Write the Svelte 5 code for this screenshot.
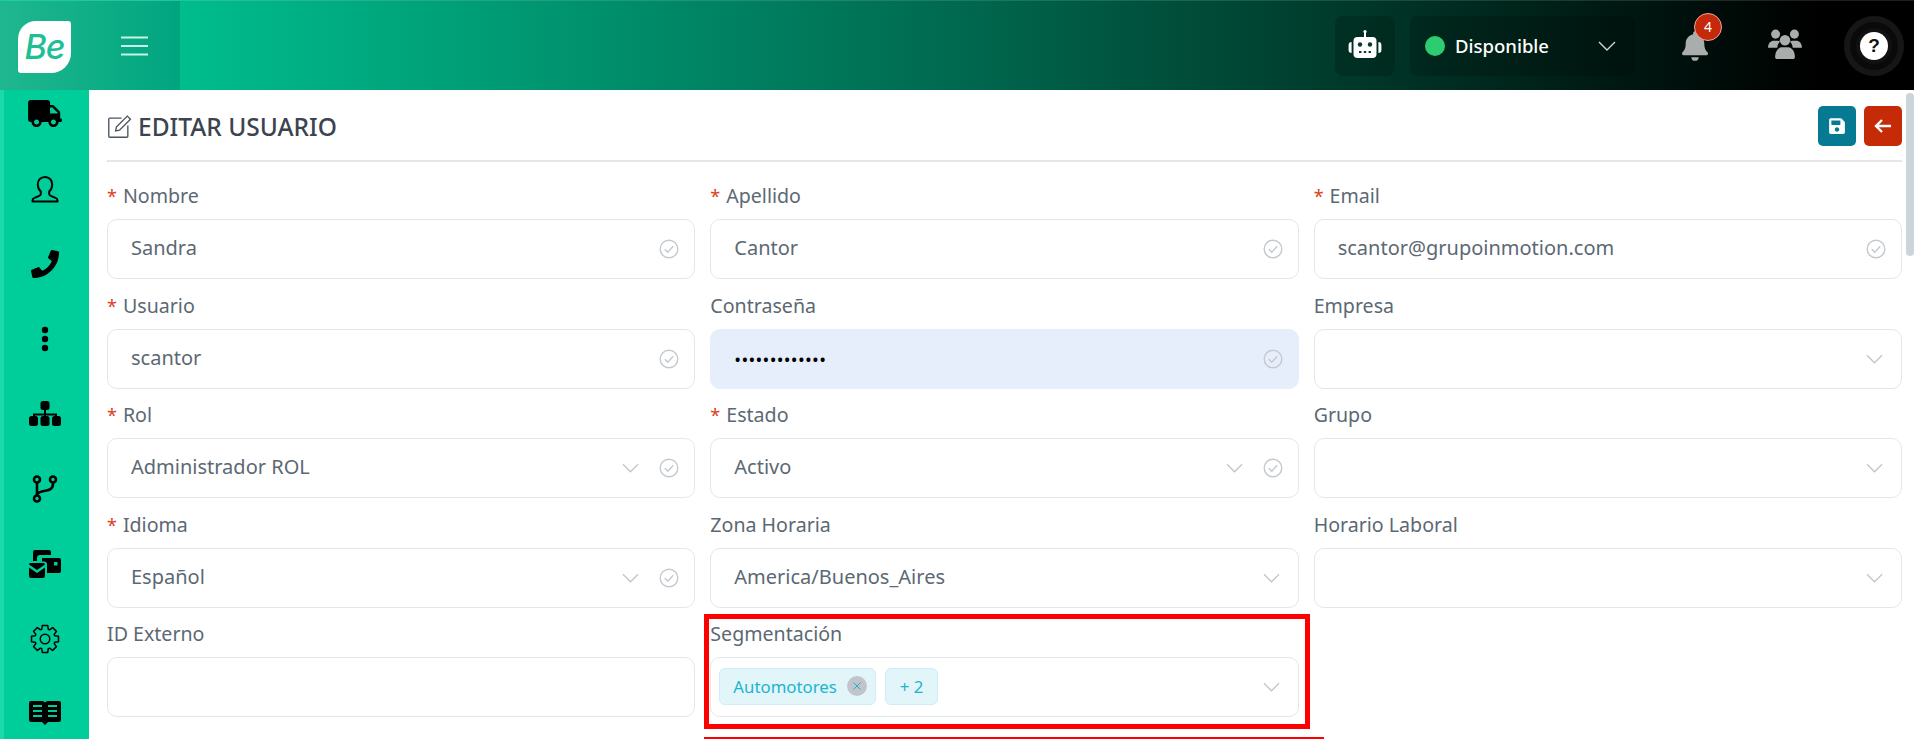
<script>
  const fields = [
    { label: 'Nombre', req: true, value: 'Sandra', check: true },
    { label: 'Apellido', req: true, value: 'Cantor', check: true },
    { label: 'Email', req: true, value: 'scantor@grupoinmotion.com', check: true },
    { label: 'Usuario', req: true, value: 'scantor', check: true },
    { label: 'Contraseña', value: '•••••••••••••', check: true, pass: true },
    { label: 'Empresa', value: '', select: true },
    { label: 'Rol', req: true, value: 'Administrador ROL', check: true, select: true },
    { label: 'Estado', req: true, value: 'Activo', check: true, select: true },
    { label: 'Grupo', value: '', select: true },
    { label: 'Idioma', req: true, value: 'Español', check: true, select: true },
    { label: 'Zona Horaria', value: 'America/Buenos_Aires', select: true },
    { label: 'Horario Laboral', value: '', select: true },
    { label: 'ID Externo', value: '' },
    { label: 'Segmentación', value: '', select: true, chips: true }
  ];

  let gear = '';
  for (let i = 0; i < 8; i++) {
    const a = (i / 8) * Math.PI * 2;
    const pts = [[-0.32, 8.2], [-0.2, 11], [0.2, 11], [0.32, 8.2]];
    for (const [da, r] of pts) {
      const x = 12 + r * Math.cos(a + da);
      const y = 12 + r * Math.sin(a + da);
      gear += (gear ? 'L' : 'M') + x.toFixed(2) + ' ' + y.toFixed(2);
    }
  }
  gear += 'Z';
</script>

<div class="page">
  <header class="topbar">
    <div class="brand">
      <div class="logo"><span>Be</span></div>
      <svg class="burger" viewBox="0 0 27 20" width="27" height="20"><path d="M0 1.500h27M0 10h27M0 18.500h27" stroke="#c9f3e6" stroke-width="2" /></svg>
    </div>
    <div class="spacer"></div>
    <div class="tile robot">
      <svg viewBox="0 0 36 36" width="36" height="36">
        <path d="M18 3v6" stroke="#fff" stroke-width="2" />
        <circle cx="18" cy="3.500" r="1.600" fill="#fff" />
        <rect x="6.500" y="9" width="23" height="21" rx="4" fill="#fff" />
        <path d="M4.600 14v11a3 3 0 0 1-3-3v-5a3 3 0 0 1 3-3zM31.400 14v11a3 3 0 0 0 3-3v-5a3 3 0 0 0-3-3z" fill="#fff" />
        <circle cx="13" cy="16.500" r="2.200" fill="#0a3a2c" /><circle cx="23" cy="16.500" r="2.200" fill="#0a3a2c" />
        <path d="M12 24h12" stroke="#0a3a2c" stroke-width="1.800" stroke-dasharray="2.400 2.400" />
      </svg>
    </div>
    <div class="tile status">
      <i class="dot"></i><span class="st">Disponible</span>
      <svg class="chev" viewBox="0 0 18 10" width="18" height="10"><path d="M1 1l8 8 8-8" fill="none" stroke="#cdd6d2" stroke-width="1.400" /></svg>
    </div>
    <div class="bell">
      <svg viewBox="0 0 448 512" width="26" height="30"><path fill="#a9aeac" d="M224 512c35.320 0 63.970-28.650 63.970-64H160.030c0 35.350 28.650 64 63.970 64zm215.390-149.710c-19.320-20.760-55.470-51.990-55.470-154.290 0-77.700-54.480-139.900-127.940-155.160V32c0-17.670-14.320-32-31.980-32s-31.980 14.330-31.980 32v20.840C118.560 68.100 64.080 130.300 64.080 208c0 102.300-36.150 133.530-55.470 154.290-6 6.450-8.660 14.160-8.610 21.710.11 16.400 12.980 32 32.100 32h383.800c19.120 0 32-15.600 32.100-32 .05-7.550-2.610-15.270-8.610-21.710z" /></svg>
      <b class="badge">4</b>
    </div>
    <div class="users">
      <svg viewBox="0 0 36 34" width="36" height="32" fill="#a9aeac">
        <circle cx="8" cy="6.500" r="4.800" /><circle cx="28" cy="6.500" r="4.800" /><circle cx="18" cy="13" r="5.600" />
        <path d="M0 21c0-5 3-7.500 6-7.500h4c1 0 2 .4 2.600 1-1.600 1.600-2.600 3.200-2.800 6.500zM36 21c0-5-3-7.500-6-7.500h-4c-1 0-2 .4-2.600 1 1.600 1.600 2.600 3.200 2.800 6.500z" />
        <path d="M7.500 31c0-7 4-10.500 7-10.500h7c3 0 7 3.500 7 10.500 0 1.200-1 2-2 2h-17c-1 0-2-.8-2-2z" />
      </svg>
    </div>
    <div class="help"><span>?</span></div>
  </header>

  <div class="body">
    <nav class="side">
      <svg viewBox="0 0 640 512" width="34" height="27"><path d="M624 352h-16V243.900c0-12.700-5.100-24.900-14.100-33.900L494 110.100c-9-9-21.200-14.100-33.900-14.100H416V48c0-26.500-21.500-48-48-48H48C21.500 0 0 21.500 0 48v320c0 26.500 21.500 48 48 48h16c0 53 43 96 96 96s96-43 96-96h128c0 53 43 96 96 96s96-43 96-96h48c8.800 0 16-7.200 16-16v-32c0-8.800-7.200-16-16-16zM160 464c-26.500 0-48-21.500-48-48s21.500-48 48-48 48 21.500 48 48-21.500 48-48 48zm320 0c-26.500 0-48-21.500-48-48s21.500-48 48-48 48 21.500 48 48-21.500 48-48 48zm80-208H416V144h44.100l99.900 99.900V256z" /></svg>
      <svg viewBox="0 0 28 28" width="28" height="28"><path d="M14 2c-4.600 0-7.200 3.400-7.200 7.600 0 3 1.200 5.400 3 7v2.400c0 1.200-1 1.700-2.200 2.200l-4 1.700C2.300 23.300 1.500 24.300 1.500 25.500v1h25v-1c0-1.200-.8-2.200-2.100-2.600l-4-1.700c-1.200-.5-2.200-1-2.200-2.200v-2.400c1.800-1.600 3-4 3-7C21.200 5.400 18.600 2 14 2z" fill="none" stroke="#000" stroke-width="2" stroke-linejoin="round" /></svg>
      <svg viewBox="0 0 512 512" width="28" height="28"><path d="M493.400 24.600l-104-24c-11.300-2.600-22.900 3.300-27.500 13.900l-48 112c-4.200 9.800-1.400 21.300 6.900 28l60.600 49.600c-36 76.700-98.900 140.500-177.200 177.200l-49.600-60.600c-6.800-8.300-18.200-11.100-28-6.900l-112 48C3.900 366.500-2 378.100.6 389.400l24 104C27.100 504.200 36.700 512 48 512c256.100 0 464-207.500 464-464 0-11.200-7.700-20.900-18.600-23.400z" /></svg>
      <svg viewBox="0 0 8 26" width="8" height="26"><circle cx="4" cy="4" r="3.200" /><circle cx="4" cy="13" r="3.200" /><circle cx="4" cy="22" r="3.200" /></svg>
      <svg viewBox="0 0 32 26" width="32" height="26">
        <rect x="11.500" y="0" width="9" height="9" rx="2.500" />
        <path d="M16 8v7M5 17v-3.500h22V17" stroke="#000" stroke-width="2" fill="none" />
        <rect x="0" y="15" width="9" height="10" rx="2.500" /><rect x="11.500" y="15" width="9" height="10" rx="2.500" /><rect x="23" y="15" width="9" height="10" rx="2.500" />
      </svg>
      <svg viewBox="0 0 26 28" width="26" height="28" fill="none" stroke="#000" stroke-width="2.600">
        <circle cx="5" cy="4.500" r="3" /><circle cx="21" cy="4.500" r="3" /><circle cx="5" cy="23.500" r="3" />
        <path d="M5 7.500v13M21 7.500v1.500c0 4.500-3 6-6.500 6.500S5 17 5 20.500" />
      </svg>
      <svg viewBox="0 0 32 28" width="32" height="28">
        <path d="M4 2a2 2 0 0 1 2-2h14a2 2 0 0 1 2 2v3h-11a3 3 0 0 0-3 3v3H4z" />
        <path d="M13 8h17a2 2 0 0 1 2 2v11a2 2 0 0 1-2 2H18V14.500a3 3 0 0 0-3-3h-2z" />
        <rect x="25" y="12" width="3.500" height="3.500" fill="#00ce9a" />
        <path d="M0 14.500a1.500 1.500 0 0 1 1.500-1.500h13a1.500 1.500 0 0 1 1.500 1.500L8 20zM0 17.500l8 5.500 8-5.500V26a2 2 0 0 1-2 2H2a2 2 0 0 1-2-2z" />
      </svg>
      <svg viewBox="0 0 24 24" width="30" height="30"><path d={gear} fill="none" stroke="#000" stroke-width="1.200" stroke-linejoin="round" /><circle cx="12" cy="12" r="3.800" fill="none" stroke="#000" stroke-width="1.200" /></svg>
      <svg class="book" viewBox="0 0 32 24" width="32" height="24">
        <path d="M2 0h11c1.500 0 3 1 3 2 0-1 1.500-2 3-2h11a2 2 0 0 1 2 2v17a2 2 0 0 1-2 2H19l-3 3-3-3H2a2 2 0 0 1-2-2V2a2 2 0 0 1 2-2z" />
        <path d="M4 5h9M4 10h9M4 15h9M19 5h9M19 10h9M19 15h9" stroke="#00ce9a" stroke-width="2" />
      </svg>
    </nav>

    <main class="main">
      <div class="titlebar">
        <h1>
          <svg viewBox="0 0 24 24" width="25" height="25" fill="none" stroke="#4a5560" stroke-width="1.300">
            <path d="M14 4H2.700a1 1 0 0 0-1 1v16.300a1 1 0 0 0 1 1H19a1 1 0 0 0 1-1V11" />
            <path d="M9 12.500L19.500 2l3 3L12 15.500l-3.700.7z" />
          </svg>
          EDITAR USUARIO
        </h1>
        <div class="actions">
          <button class="btn save" aria-label="Guardar"><svg viewBox="0 0 448 512" width="16" height="18"><path fill="#fff" d="M433.941 129.941l-83.882-83.882A48 48 0 0 0 316.118 32H48C21.490 32 0 53.490 0 80v352c0 26.510 21.490 48 48 48h352c26.510 0 48-21.490 48-48V163.882a48 48 0 0 0-14.059-33.941zM224 416c-35.346 0-64-28.654-64-64 0-35.346 28.654-64 64-64s64 28.654 64 64c0 35.346-28.654 64-64 64zm96-304.520V212c0 6.627-5.373 12-12 12H76c-6.627 0-12-5.373-12-12V108c0-6.627 5.373-12 12-12h228.520c3.183 0 6.235 1.264 8.485 3.515l3.480 3.480A11.996 11.996 0 0 1 320 111.480z" /></svg></button>
          <button class="btn back" aria-label="Volver"><svg viewBox="0 0 18 16" width="18" height="16"><path d="M17 8H2M8 2L2 8l6 6" fill="none" stroke="#fff" stroke-width="2.400" /></svg></button>
        </div>
      </div>

      <div class="form">
        {#each fields as f}
          <div class="field">
            <div class="label">{#if f.req}<em>*</em>{/if}{f.label}</div>
            <div class="input" class:pass={f.pass}>
              {#if f.chips}
                <span class="chip">Automotores<i class="close"><svg viewBox="0 0 10 10" width="10" height="10"><path d="M1.500 1.500l7 7M8.500 1.500l-7 7" stroke="#20b4cf" stroke-width="1" /></svg></i></span>
                <span class="chip">+ 2</span>
              {:else}
                <span class="value">{f.value}</span>
              {/if}
              <span class="grow"></span>
              {#if f.select}
                <svg class="ic sel" viewBox="0 0 18 10" width="17" height="10"><path d="M1 1l8 8 8-8" fill="none" stroke="#bfc5ca" stroke-width="1.300" /></svg>
              {/if}
              {#if f.check}
                <svg class="ic" viewBox="0 0 20 20" width="20" height="20"><circle cx="10" cy="10" r="8.800" fill="none" stroke="#c4c9ce" stroke-width="1.400" /><path d="M5.800 10.300l3 3 5.400-6" fill="none" stroke="#c4c9ce" stroke-width="1.400" /></svg>
              {/if}
            </div>
          </div>
        {/each}
      </div>

      <div class="mark box"></div>
      <div class="mark line"></div>
    </main>

    <div class="scroll"><div class="thumb"></div></div>
  </div>
</div>

<style>
  :global(body) { margin: 0; overflow: hidden; background: #fff; }
  .page {
    width: 1914px; height: 739px; overflow: hidden;
    display: flex; flex-direction: column;
    font-family: "Noto Sans", "Open Sans", sans-serif;
    color: #5c6873;
  }
  .topbar {
    height: 90px; flex: none; display: flex; align-items: center;
    background: linear-gradient(90deg, #00c593 0%, #00c090 8%, #00694f 50%, #003a2b 70%, #000 95%);
    border-top: 1px solid rgba(255,255,255,.12);
    box-sizing: border-box;
  }
  .brand {
    width: 180px; height: 100%; flex: none; display: flex; align-items: center;
    padding-left: 18px; box-sizing: border-box;
    background: linear-gradient(90deg, #1fb78f, #00a57f);
  }
  .logo {
    width: 53px; height: 52px; background: #fff; box-sizing: border-box;
    border-radius: 18px 3px 20px 3px;
    display: flex; align-items: center; justify-content: center;
    margin-top: 2px;
  }
  .logo span {
    font: italic 500 34px "Inter", sans-serif; color: #1fbf95; letter-spacing: -1px;
  }
  .burger { margin-left: 50px; }
  .spacer { flex: 1; }
  .tile { height: 60px; background: rgba(0,0,0,.16); border-radius: 8px; display: flex; align-items: center; }
  .robot { width: 60px; justify-content: center; margin-right: 15px; }
  .status { width: 225px; padding-left: 15px; box-sizing: border-box; color: #fff; font-size: 18.500px; font-weight: 500; }
  .dot { width: 20px; height: 20px; border-radius: 50%; background: #2ecc71; margin-right: 10px; flex: none; }
  .st { width: 143px; flex: none; }
  .bell { position: relative; margin-left: 47px; width: 26px; height: 30px; }
  .badge {
    position: absolute; left: 12px; top: -18px; width: 26px; height: 26px; border-radius: 50%;
    background: #c4290b; border: 1px solid #e9a99c; color: #fff; font-size: 14px; font-weight: 400;
    display: flex; align-items: center; justify-content: center;
  }
  .users { margin-left: 59px; margin-top: 1px; }
  .help {
    margin-left: 41px; margin-right: 10px; width: 60px; height: 60px; border-radius: 50%;
    background: #111; display: flex; align-items: center; justify-content: center;
    box-shadow: inset 0 0 0 6px #161616, inset 0 0 0 12px #0a0a0a;
  }
  .help span {
    width: 28px; height: 28px; border-radius: 50%; background: #fff; color: #111;
    font: 700 19px "Liberation Sans", sans-serif;
    display: flex; align-items: center; justify-content: center;
  }
  .body { flex: 1; display: flex; min-height: 0; }
  .side {
    width: 89px; flex: none; box-sizing: border-box; background: #00ce9a;
    border-left: 4px solid #1cd9a9; padding-right: 4px;
    display: grid; grid-template-rows: 61px repeat(8, 75px); justify-items: center; align-items: center;
    height: 649px; overflow: hidden;
  }
  .side svg:first-child { align-self: start; margin-top: 10px; }
  .side .book { margin-bottom: 2px; }
  .main { flex: 1; position: relative; padding: 0 3px 0 18px; min-width: 0; }
  .titlebar {
    height: 71px; border-bottom: 2px solid #e4e7ea; box-sizing: border-box;
    display: flex; align-items: center; justify-content: space-between;
    margin-top: 1px;
  }
  h1 {
    margin: 0; font-size: 24.500px; font-weight: 500; color: #3b4450;
    display: flex; align-items: center; gap: 6px;
    padding-top: 2px;
  }
  .actions { display: flex; gap: 8px; }
  .btn { width: 38px; height: 40px; border: 0; border-radius: 5px; padding: 0; display: flex; align-items: center; justify-content: center; }
  .save { background: #067a93; }
  .back { background: #c52b07; }
  .form { display: grid; grid-template-columns: repeat(3, 1fr); column-gap: 15px; row-gap: 0; margin-top: 19px; }
  .field { height: 109.500px; }
  .label { font-size: 19.600px; line-height: 30px; height: 38px; }
  .label em { color: #d9411e; font-style: normal; font-size: 18px; margin-right: 6px; }
  .input {
    height: 60px; box-sizing: border-box; border: 1px solid #e4e7ea; border-radius: 10px;
    display: flex; align-items: center; padding: 0 15px 0 23px; gap: 20px;
    font-size: 20px; background: #fff;
  }
  .value { margin-top: -3px; }
  .input.pass { background: #e7eefb; border-color: #e7eefb; }
  .input.pass .value { color: #000; font-size: 18px; letter-spacing: .3px; margin-top: 0; }
  .grow { flex: 1; }
  .ic { flex: none; }
  .sel:last-child { margin-right: 3px; }
  .chip {
    height: 37px; box-sizing: border-box; padding: 0 8px 0 13px; margin-top: -2px;
    background: #e2f6fa; border: 1px solid #cdeef4; border-radius: 6px;
    color: #20b4cf; font-size: 16.800px;
    display: inline-flex; align-items: center; gap: 10px; margin-left: -15px; margin-right: -11px;
  }
  .chip + .chip { margin-left: 0; padding: 0 14px; }
  .close { width: 20px; height: 20px; border-radius: 50%; background: #c1c5cb; display: flex; align-items: center; justify-content: center; }
  .mark { position: absolute; box-sizing: border-box; }
  .box { left: 615px; top: 524px; width: 606px; height: 115px; border: 5px solid #f00; }
  .line { left: 615px; top: 647px; width: 620px; height: 2px; background: #f00; }
  .scroll { width: 9px; flex: none; padding-top: 3px; padding-left: 1px; box-sizing: border-box; }
  .thumb { height: 163px; background: #ccd5da; border-radius: 4px; }
</style>
